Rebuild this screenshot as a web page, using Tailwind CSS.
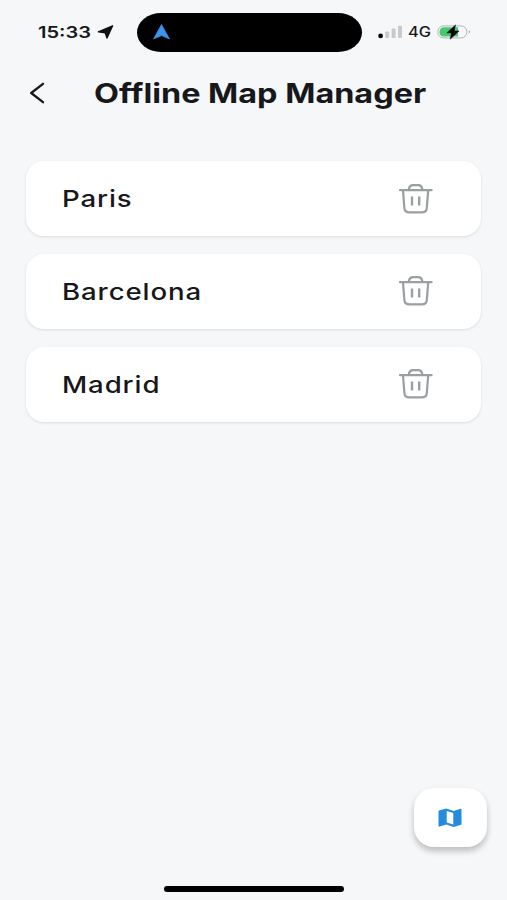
<!DOCTYPE html>
<html lang="en">
<head>
<meta charset="utf-8">
<meta name="viewport" content="width=device-width, initial-scale=1">
<title>Offline Map Manager</title>
<script src="https://cdn.jsdelivr.net/npm/@tailwindcss/browser@4"></script>
</head>
<body class="bg-[#f6f7f9]">
<svg class="hidden">
  <symbol id="trash" viewBox="0 0 36 32">
    <g fill="none" stroke="#9b9fa1" stroke-width="2.2" stroke-linecap="round" stroke-linejoin="round">
      <path d="M2 7.2H33.6" />
      <path d="M10.8 6.7C11.2 3.3 12.6 2.2 15.2 2.2H20C22.6 2.2 24 3.3 24.4 6.7" />
      <path d="M5 7.4L6.4 25.2C6.7 28.5 8.1 29.4 11.4 29.4H23.8C27.1 29.4 28.5 28.5 28.8 25.2L30.2 7.4" />
      <path d="M14 13.5V22.4M21.2 13.5V22.4" stroke-width="2.4" stroke-linecap="butt" />
    </g>
  </symbol>
</svg>
<div class="relative flex h-[900px] w-[507px] flex-col overflow-hidden bg-[#f6f7f9] font-['Inter','Liberation_Sans',sans-serif] text-[#17181b]">
  <header class="flex h-16 shrink-0 items-center">
    <div class="ml-[38px] flex w-[99px] items-center">
      <span class="w-[59px] shrink-0 origin-left scale-x-[1.25] text-[16px] leading-5 font-semibold">15:33</span>
      <svg class="h-[14px] w-[17px] shrink-0" viewBox="0 0 17 14"><path d="M15.6.8L10 13L8.2 7.8L1.4 6.8Z" fill="#111" stroke="#111" stroke-width="1.4" stroke-linejoin="round" /></svg>
    </div>
    <div class="flex h-[39px] w-[225px] items-center rounded-[24px/19.5px] bg-black pl-4">
      <svg class="h-[16px] w-[17px]" viewBox="0 0 17 16"><path d="M8.5.5L16.5 15L8.5 11.6L.5 15Z" fill="#3e94ed" stroke="#3e94ed" stroke-width=".7" stroke-linejoin="round" /></svg>
    </div>
    <div class="ml-4 flex items-center">
      <svg class="h-[14px] w-[25px]" viewBox="0 0 25 14"><circle cx="2.6" cy="10.9" r="2.4" fill="#080808" /><g fill="#c8cacc"><rect x="7.2" y="6.5" width="4" height="6.5" rx="1" /><rect x="13.6" y="3.5" width="4" height="9.5" rx="1" /><rect x="20" y=".8" width="4" height="12.2" rx="1" /></g></svg>
      <span class="ml-[5px] w-[29px] origin-left scale-x-[1.17] text-[14px] leading-5 font-medium">4G</span>
      <svg class="h-[16px] w-[35px]" viewBox="0 0 35 16"><rect x=".9" y="1.9" width="28.8" height="12" rx="5.5" fill="none" stroke="#b0b3b5" /><path d="M7.5 3.2H21V12.6H7.5Q2.5 12.6 2.5 7.9T7.5 3.2Z" fill="#48c96e" /><path d="M31.8 6Q34 7.8 31.8 9.6Z" fill="#999" /><path d="M18.5.9L9.8 8.9H14.5L13.2 15.2L22 6.9H17.2Z" fill="#050505" stroke="#050505" stroke-width=".5" stroke-linejoin="round" /></svg>
    </div>
  </header>
  <div class="flex h-[58px] shrink-0 items-center">
    <svg class="ml-[29px] h-[22px] w-[16px]" viewBox="0 0 16 22"><path d="M14 1.8L2.2 11L14 20.2" fill="none" stroke="#17181b" stroke-width="2.3" stroke-linecap="round" stroke-linejoin="round" /></svg>
    <h1 class="mt-[2px] ml-[48.5px] origin-left scale-x-[1.2] text-[27px] leading-8 font-bold whitespace-nowrap">Offline Map Manager</h1>
  </div>
  <main class="mt-[39px] flex flex-col gap-[17.5px] pr-[26px] pl-[26px]">
    <div class="flex h-[75.3px] items-center justify-between rounded-[18px] bg-white pr-[47.5px] pl-9 shadow-[0_1px_3px_rgba(0,0,0,0.11)]">
      <span class="origin-left scale-x-[1.2] text-[23px] leading-7 font-medium tracking-[0.75px]">Paris</span>
      <svg class="h-[32px] w-[36px]"><use href="#trash" /></svg>
    </div>
    <div class="flex h-[75.3px] items-center justify-between rounded-[18px] bg-white pr-[47.5px] pl-9 shadow-[0_1px_3px_rgba(0,0,0,0.11)]">
      <span class="mt-px origin-left scale-x-[1.2] text-[23px] leading-7 font-medium tracking-[0.75px]">Barcelona</span>
      <svg class="h-[32px] w-[36px]"><use href="#trash" /></svg>
    </div>
    <div class="flex h-[75.3px] items-center justify-between rounded-[18px] bg-white pr-[47.5px] pl-9 shadow-[0_1px_3px_rgba(0,0,0,0.11)]">
      <span class="mt-px origin-left scale-x-[1.2] text-[23px] leading-7 font-medium tracking-[0.75px]">Madrid</span>
      <svg class="h-[32px] w-[36px]"><use href="#trash" /></svg>
    </div>
  </main>
  <button class="absolute right-[20px] bottom-[53px] flex h-[59px] w-[73px] items-center justify-center rounded-[20px] bg-white pr-[2px] shadow-[0_4px_6px_rgba(0,0,0,0.24)]" aria-label="Map">
    <svg class="h-[20px] w-[24px]" viewBox="0 0 24 20"><path fill-rule="evenodd" d="M1 2.6Q.5 2.8.5 3.3V18Q.5 19 1.5 18.6L8.3 16.5L15.7 18.9L23 16.8Q23.5 16.6 23.5 16V1.5Q23.5.5 22.5.8L15.7 3L8.3.6ZM8.7 2.9L15.3 5V16.6L8.7 14.5Z" fill="#258bdc" /></svg>
  </button>
  <div class="mt-auto mb-[8px] ml-[164px] h-[6px] w-[180px] shrink-0 rounded-full bg-black"></div>
</div>
</body>
</html>
